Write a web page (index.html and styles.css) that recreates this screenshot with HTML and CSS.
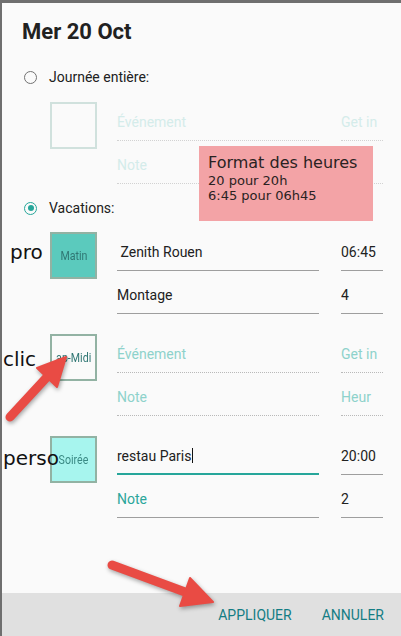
FILE: index.html
```html
<!DOCTYPE html>
<html lang="fr">
<head>
    <meta charset="UTF-8">
    <meta name="viewport" content="width=device-width, initial-scale=1.0">
    <title>Mer 20 Oct</title>
    <link rel="stylesheet" href="styles.css">
</head>
<body>
    <div class="dialog">
        <div class="content">
            <h1 class="title">Mer 20 Oct</h1>

            <div class="choice"><span class="radio"></span>Journée entière:</div>
            <div class="slot slot-off">
                <div class="swatch"></div>
                <div class="fields">
                    <div class="line">
                        <span class="field main empty">Événement</span>
                        <span class="field short empty">Get in</span>
                    </div>
                    <div class="line">
                        <span class="field main empty">Note</span>
                        <span class="field short empty"></span>
                    </div>
                </div>
            </div>

            <div class="choice choice-on"><span class="radio"></span>Vacations:</div>

            <div class="slot">
                <span class="tag tag-pro">pro</span>
                <div class="swatch swatch-matin"><span>Matin</span></div>
                <div class="fields">
                    <div class="line">
                        <span class="field main">&nbsp;Zenith Rouen</span>
                        <span class="field short">06:45</span>
                    </div>
                    <div class="line">
                        <span class="field main">Montage</span>
                        <span class="field short">4</span>
                    </div>
                </div>
            </div>

            <div class="slot">
                <span class="tag tag-clic">clic</span>
                <div class="swatch"><span>ap-Midi</span></div>
                <div class="fields">
                    <div class="line">
                        <span class="field main empty">Événement</span>
                        <span class="field short empty">Get in</span>
                    </div>
                    <div class="line">
                        <span class="field main empty">Note</span>
                        <span class="field short empty">Heur</span>
                    </div>
                </div>
            </div>

            <div class="slot">
                <span class="tag tag-perso">perso</span>
                <div class="swatch swatch-soiree"><span>Soirée</span></div>
                <div class="fields">
                    <div class="line">
                        <span class="field main focused">restau Paris<span class="caret"></span></span>
                        <span class="field short">20:00</span>
                    </div>
                    <div class="line">
                        <span class="field main label">Note</span>
                        <span class="field short">2</span>
                    </div>
                </div>
            </div>
        </div>

        <div class="actions">
            <button class="action">Appliquer</button>
            <button class="action">Annuler</button>
        </div>

        <div class="tip">
            <div class="tip-title">Format des heures</div>
            <div>20 pour 20h</div>
            <div>6:45 pour 06h45</div>
        </div>
    </div>

    <svg class="arrows" width="401" height="636" viewBox="0 0 401 636">
        <g fill="#e94b44" stroke="#e94b44">
            <line x1="10" y1="417" x2="47" y2="377" stroke-width="9" stroke-linecap="round"/>
            <polygon points="66,357 57,387 37,368" stroke-width="2" stroke-linejoin="round"/>
            <line x1="112" y1="565" x2="185" y2="592" stroke-width="9" stroke-linecap="round"/>
            <polygon points="213,602 180,606 190,578" stroke-width="2" stroke-linejoin="round"/>
        </g>
    </svg>
</body>
</html>
```

FILE: styles.css
```css
body {
    margin: 0;
    background: #6f6f6f;
    font-family: Roboto, "Liberation Sans", sans-serif;
    color: #212121;
}

.dialog {
    position: relative;
    margin: 3px 0 0 2px;
    height: 633px;
    background: #fafafa;
    display: flex;
    flex-direction: column;
    overflow: hidden;
}

.content {
    flex: 1;
    padding: 15px 18px 0 20px;
}

.title {
    margin: 0 0 19px;
    font-size: 22px;
    line-height: 28px;
    font-weight: 700;
    color: #212121;
}

.choice {
    display: flex;
    align-items: center;
    height: 24px;
    margin: 0 0 9px 2px;
    font-size: 14px;
    line-height: 24px;
}

.choice-on {
    margin-top: 12px;
    margin-bottom: 8px;
}

.radio {
    box-sizing: border-box;
    width: 13px;
    height: 13px;
    margin-right: 12px;
    border: 1.5px solid #727272;
    border-radius: 50%;
    display: flex;
    align-items: center;
    justify-content: center;
}

.choice-on .radio {
    border-color: #26a69a;
}

.choice-on .radio::after {
    content: "";
    width: 6px;
    height: 6px;
    border-radius: 50%;
    background: #26a69a;
}

.slot {
    position: relative;
    display: flex;
    gap: 20px;
    padding-left: 28px;
}

.slot + .slot {
    margin-top: 16px;
}

.swatch {
    box-sizing: border-box;
    flex: none;
    width: 47px;
    height: 47px;
    margin-top: 4px;
    border: 2px solid #92b2a3;
    display: flex;
    align-items: center;
    justify-content: center;
    color: #2f7673;
    font-size: 12.5px;
}

.swatch span {
    display: inline-block;
    transform: scaleX(0.85);
    white-space: nowrap;
}

.slot-off .swatch {
    border-color: #d0e1dd;
}

.swatch-matin {
    background: #5bcabd;
}

.swatch-soiree {
    background: #a7f5ee;
    color: #3a8a84;
}

.fields {
    display: flex;
    flex-direction: column;
}

.line {
    display: flex;
    gap: 22px;
}

.field {
    box-sizing: border-box;
    height: 43px;
    padding: 14px 0 8px;
    font-size: 14px;
    line-height: 20px;
    border-bottom: 1px solid #9e9e9e;
    white-space: nowrap;
    overflow: hidden;
}

.main {
    width: 202px;
}

.short {
    width: 42px;
}

.empty {
    color: #8ed2cb;
    border-bottom: 1px dotted #b9b9b9;
}

.slot-off .empty {
    color: #d4ecea;
    border-bottom-color: #d2d2d2;
}

.focused {
    padding-bottom: 7px;
    border-bottom: 2px solid #26a69a;
}

.label {
    color: #2ba69b;
}

.caret {
    display: inline-block;
    width: 1px;
    height: 15px;
    margin-left: 1px;
    vertical-align: -2px;
    background: #111;
}

/* hand written notes over the screenshot */
.tag {
    position: absolute;
    font-family: "DejaVu Sans", sans-serif;
    font-size: 20px;
    line-height: 24px;
    color: #111;
}

.tag-pro {
    left: -12px;
    top: 12px;
}

.tag-clic {
    left: -19px;
    top: 17px;
}

.tag-perso {
    left: -19px;
    top: 14px;
    z-index: 1;
}

.tip {
    position: absolute;
    left: 197px;
    top: 143px;
    box-sizing: border-box;
    width: 174px;
    height: 75px;
    padding: 7px 9px;
    background: #f3a3a6;
    font-family: "DejaVu Sans", sans-serif;
    font-size: 13px;
    line-height: 15px;
    color: #2a2222;
}

.tip-title {
    font-size: 16px;
    line-height: 20px;
}

.actions {
    height: 43px;
    flex: none;
    background: #e0e0e0;
    display: flex;
    justify-content: flex-end;
    align-items: center;
    gap: 30px;
    padding-right: 17px;
}

.action {
    padding: 0;
    border: none;
    background: none;
    font-family: Roboto, "Liberation Sans", sans-serif;
    font-size: 14px;
    text-transform: uppercase;
    color: #137d84;
    cursor: pointer;
}

.arrows {
    position: absolute;
    left: 0;
    top: 0;
    pointer-events: none;
    filter: drop-shadow(1px 2px 2px rgba(0, 0, 0, 0.35));
}
```
